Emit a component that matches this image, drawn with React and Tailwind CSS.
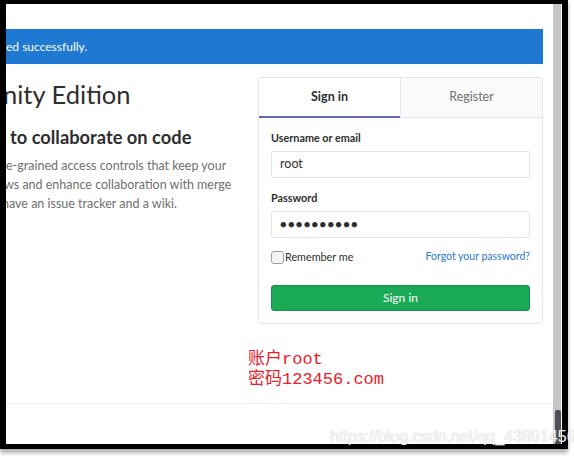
export default function App() {
  const ui = { fontFamily: "Lato, 'Noto Sans', sans-serif" }
  const note = { fontFamily: "'Liberation Mono', 'Noto Sans CJK SC', monospace" }

  return (
    <div className="relative w-[574px] h-[459px] bg-white overflow-hidden" style={ui}>
      {/* framed window */}
      <div className="flex w-[568px] h-[449px] border-l-[6px] border-t-[4px] border-r-[6px] border-b-[5px] border-black shadow-[0_4px_4px_rgba(0,0,0,0.3)]">
        <div className="flex-1 flex flex-col overflow-hidden">
          <div className="h-[25px] shrink-0" />
          <div className="h-[35px] mr-[10px] bg-[#1f78d1] flex items-center text-white text-[12px] shrink-0">
            <span className="whitespace-nowrap">ed successfully.</span>
          </div>

          <div className="flex mt-[13px] shrink-0">
            <div className="flex-1 overflow-hidden">
              <h1 className="-ml-[3px] text-[25.5px] leading-[34px] text-[#2e2e2e] whitespace-nowrap">nity Edition</h1>
              <h3 className="mt-[15px] ml-[4px] text-[18.3px] leading-[22px] font-bold text-[#2e2e2e] whitespace-nowrap">to collaborate on code</h3>
              <div className="mt-[8px] text-[12.5px] leading-[19px] text-[#707070] whitespace-nowrap">
                <p>e-grained access controls that keep your</p>
                <p className="-ml-[2px]">ws and enhance collaboration with merge</p>
                <p className="-ml-[4px]">have an issue tracker and a wiki.</p>
              </div>
            </div>

            <div className="w-[285px] mr-[10px] border border-[#e5e5e5] rounded-[4px] flex flex-col">
              <div className="flex h-[40px] border-b border-[#e5e5e5]">
                <div className="flex-1 flex items-center justify-center border-b-2 border-[#6666c4] -mb-px text-[12.5px] font-bold text-[#2e2e2e]">Sign in</div>
                <div className="flex-1 flex items-center justify-center bg-[#fafafa] border-l border-[#e5e5e5] rounded-tr-[4px] text-[12.5px] text-[#707070]">Register</div>
              </div>
              <div className="px-[12px] pt-[12px] pb-[12px]">
                <label className="block text-[10.8px] leading-[16px] font-bold text-[#2e2e2e]">Username or email</label>
                <div className="mt-[5px] h-[27px] border border-[#e5e5e5] rounded-[2px] flex items-center px-[8px] text-[12.5px] text-[#2e2e2e]">root</div>
                <label className="block mt-[12px] text-[10.8px] leading-[16px] font-bold text-[#2e2e2e]">Password</label>
                <div className="mt-[5px] h-[27px] border border-[#e5e5e5] rounded-[2px] flex items-center px-[8px] text-[11px] tracking-[1.3px] text-[#2e2e2e]">●●●●●●●●●●</div>
                <div className="mt-[11px] flex items-center justify-between h-[16px]">
                  <div className="flex items-center">
                    <span className="w-[13px] h-[13px] rounded-[3px] border border-[#a0a0a0] bg-[#f4f4f4]" />
                    <span className="ml-px text-[10.8px] text-[#2e2e2e]">Remember me</span>
                  </div>
                  <span className="text-[10.5px] text-[#1f78d1]">Forgot your password?</span>
                </div>
                <div className="mt-[20px] h-[26px] rounded-[3px] bg-[#1aaa55] border border-[#168f48] flex items-center justify-center text-[12px] text-white">Sign in</div>
              </div>
            </div>
          </div>

          <div className="mt-[26px] ml-[242px] text-[17px] leading-[20px] text-[#e8202a] whitespace-nowrap shrink-0" style={note}>
            <p>账户root</p>
            <p>密码123456.com</p>
          </div>

          <div className="mt-[13px] h-px bg-[#ececec] shrink-0" />
        </div>

        {/* scrollbar */}
        <div className="w-[9px] flex shrink-0">
          <div className="w-[8px] bg-[#c6c6c6] flex flex-col justify-end">
            <div className="ml-[2px] w-[6px] h-[34px] bg-[#4d5058] rounded-t-[2px]" />
          </div>
          <div className="w-px bg-white" />
        </div>
      </div>

      {/* watermark */}
      <div
        className="absolute left-[330px] top-[427px] text-[16px] leading-[20px] text-white/90 whitespace-nowrap [text-shadow:0_0_1px_rgba(120,120,120,0.6)]"
        style={{ fontFamily: "'Liberation Sans', Arial, sans-serif" }}
      >
        https://blog.csdn.net/qq_43891456
      </div>
    </div>
  )
}
